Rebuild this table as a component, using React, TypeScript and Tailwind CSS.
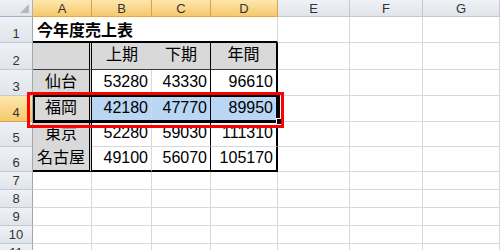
import React from 'react';

const COLS = ['A', 'B', 'C', 'D', 'E', 'F', 'G'];
const ROWS = [1, 2, 3, 4, 5, 6, 7, 8, 9, 10, 11];

const data: Record<number, [string, string, string, string]> = {
  2: ['', '上期', '下期', '年間'],
  3: ['仙台', '53280', '43330', '96610'],
  4: ['福岡', '42180', '47770', '89950'],
  5: ['東京', '52280', '59030', '111310'],
  6: ['名古屋', '49100', '56070', '105170'],
};

const grid = 'border-[#d8d8d8]';

// border / fill per table cell (rows 2-6, cols A-D)
const tableCell = (r: number, c: number) => {
  let cls = '';
  if (c === 0) cls += 'bg-[#d9d9d9] border-double border-r-[3px] border-r-black ';
  if (c === 1) cls += r === 2 ? 'bg-[#d9d9d9] ' : `border-r ${grid} `;
  if (c === 2) cls += (r === 2 ? 'bg-[#d9d9d9] ' : '') + 'border-r border-r-black ';
  if (c === 3) cls += (r === 2 ? 'bg-[#d9d9d9] ' : '') + 'border-r-2 border-r-black ';
  if (r === 4 && c > 0) cls += 'bg-[#b9d6f5] ';
  if (r === 2) cls += 'border-b border-b-[#3a3a3a] ';
  else if (r === 6) cls += 'border-b-2 border-b-black ';
  else if (c > 0) cls += `border-b border-b-[#d8d8d8] `;
  return cls;
};

const Header = ({ label, hot, className = '' }: { label: string; hot?: boolean; className?: string }) => (
  <div
    className={`flex justify-center text-[13px] leading-none text-[#333] ${
      hot
        ? 'bg-gradient-to-b from-[#fde7ad] to-[#f6c86c] border-[#d9a24c]'
        : 'bg-gradient-to-b from-[#eef1f5] to-[#e1e5eb] border-[#c3c9d0]'
    } ${className}`}
  >
    {label}
  </div>
);

export default function App() {
  return (
    <div
      className="relative w-[500px] h-[250px] overflow-hidden bg-white"
      style={{ fontFamily: '"Liberation Sans", "Noto Sans CJK JP", sans-serif' }}
    >
      <div className="grid grid-cols-[33px_59px_60px_59px_67px_72px_73px_77px] grid-rows-[17px_26px_27px_26px_26px_25px_25px_18px_18px_18px_18px_18px]">
        {/* corner */}
        <div className="relative bg-gradient-to-b from-[#eef1f5] to-[#e1e5eb] border-r border-b border-[#a9b1bb]">
          <svg className="absolute right-[3px] bottom-[3px]" width="9" height="9" viewBox="0 0 9 9">
            <path d="M9 0 L9 9 L0 9 Z" fill="#b4bac2" />
          </svg>
        </div>
        {COLS.map((c, i) => (
          <Header
            key={c}
            label={c}
            hot={i < 4}
            className={`items-center pt-[1px] border-r border-b ${i < 4 ? 'border-b-[#e9a83b]' : ''}`}
          />
        ))}

        {ROWS.map((r) => (
          <React.Fragment key={r}>
            <Header
              label={String(r)}
              hot={r === 4}
              className="items-end pb-[2px] border-b border-r border-r-[#9ea7b2]"
            />
            {r === 1 && (
              <div className="col-span-4 flex items-center pl-[4px] pb-[1px] border-b-2 border-b-black border-r border-r-[#d8d8d8] text-[16px] font-bold leading-none text-black" style={{ fontFamily: '"Noto Sans CJK JP", sans-serif' }}>
                今年度売上表
              </div>
            )}
            {r >= 2 && r <= 6 &&
              data[r].map((v, c) => (
                <div
                  key={c}
                  className={`flex items-center pb-[2px] text-[16px] leading-none text-black ${
                    c === 0 || r === 2 ? 'justify-center' : 'justify-end pr-[3px]'
                  } ${tableCell(r, c)}`}
                >
                  {v}
                </div>
              ))}
            {COLS.slice(r === 1 || (r >= 2 && r <= 6) ? 4 : 0).map((c) => (
              <div key={c} className={`border-r border-b ${grid}`} />
            ))}
          </React.Fragment>
        ))}
      </div>

      {/* selection A4:D4 */}
      <div className="absolute left-[33px] top-[95px] w-[247px] h-[28px] border-2 border-b-[3px] border-black">
        <div className="absolute -right-[5px] -bottom-[5px] w-[7px] h-[7px] bg-black border border-white" />
      </div>

      {/* red highlight */}
      <div className="absolute left-[27px] top-[92px] w-[257px] h-[36px] border-[3px] border-[#ff0000]" />
    </div>
  );
}
